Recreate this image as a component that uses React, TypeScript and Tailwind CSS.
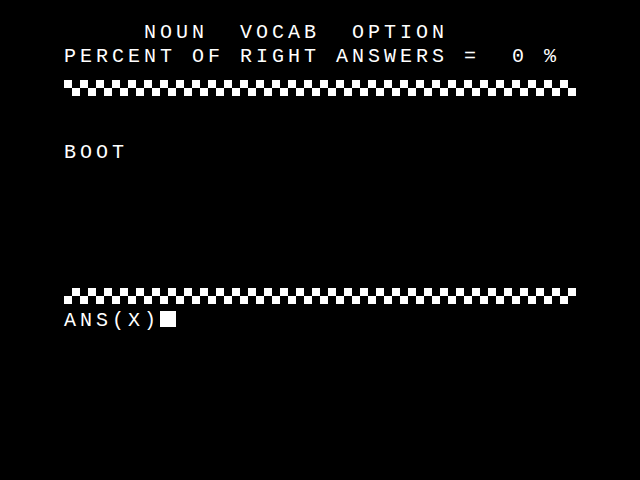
import React from 'react';

// two-row checker bar drawn as 8px blocks; flip swaps which row starts white
function Checker({ flip = false }: { flip?: boolean }) {
  const cells: React.ReactNode[] = [];
  for (let i = 0; i < 64; i++) {
    const top = (i % 2 === 0) !== flip;
    cells.push(<rect key={i} x={i * 8} y={top ? 0 : 8} width={8} height={8} fill="#fff" />);
  }
  return (
    <svg width={512} height={16} viewBox="0 0 512 16" shapeRendering="crispEdges" className="block">
      {cells}
    </svg>
  );
}

function Line({ children }: { children?: React.ReactNode }) {
  return (
    <div className="h-6 flex items-start whitespace-pre text-[20px] leading-[17px] tracking-[4px]">
      {children}
    </div>
  );
}

export default function App() {
  return (
    <div
      className="w-[640px] h-[480px] bg-black text-white pt-6 pl-16 overflow-hidden"
      style={{ fontFamily: '"Liberation Mono", "DejaVu Sans Mono", monospace' }}
    >
      <Line>{'     NOUN  VOCAB  OPTION'}</Line>
      <Line>{'PERCENT OF RIGHT ANSWERS =  0 %'}</Line>
      <div className="h-6 pt-2">
        <Checker />
      </div>
      <Line />
      <Line />
      <Line>BOOT</Line>
      <Line />
      <Line />
      <Line />
      <Line />
      <Line />
      <div className="h-6">
        <Checker flip />
      </div>
      <Line>
        <span>ANS(X)</span>
        <span className="inline-block w-4 h-4 bg-white -mt-px" />
      </Line>
    </div>
  );
}
